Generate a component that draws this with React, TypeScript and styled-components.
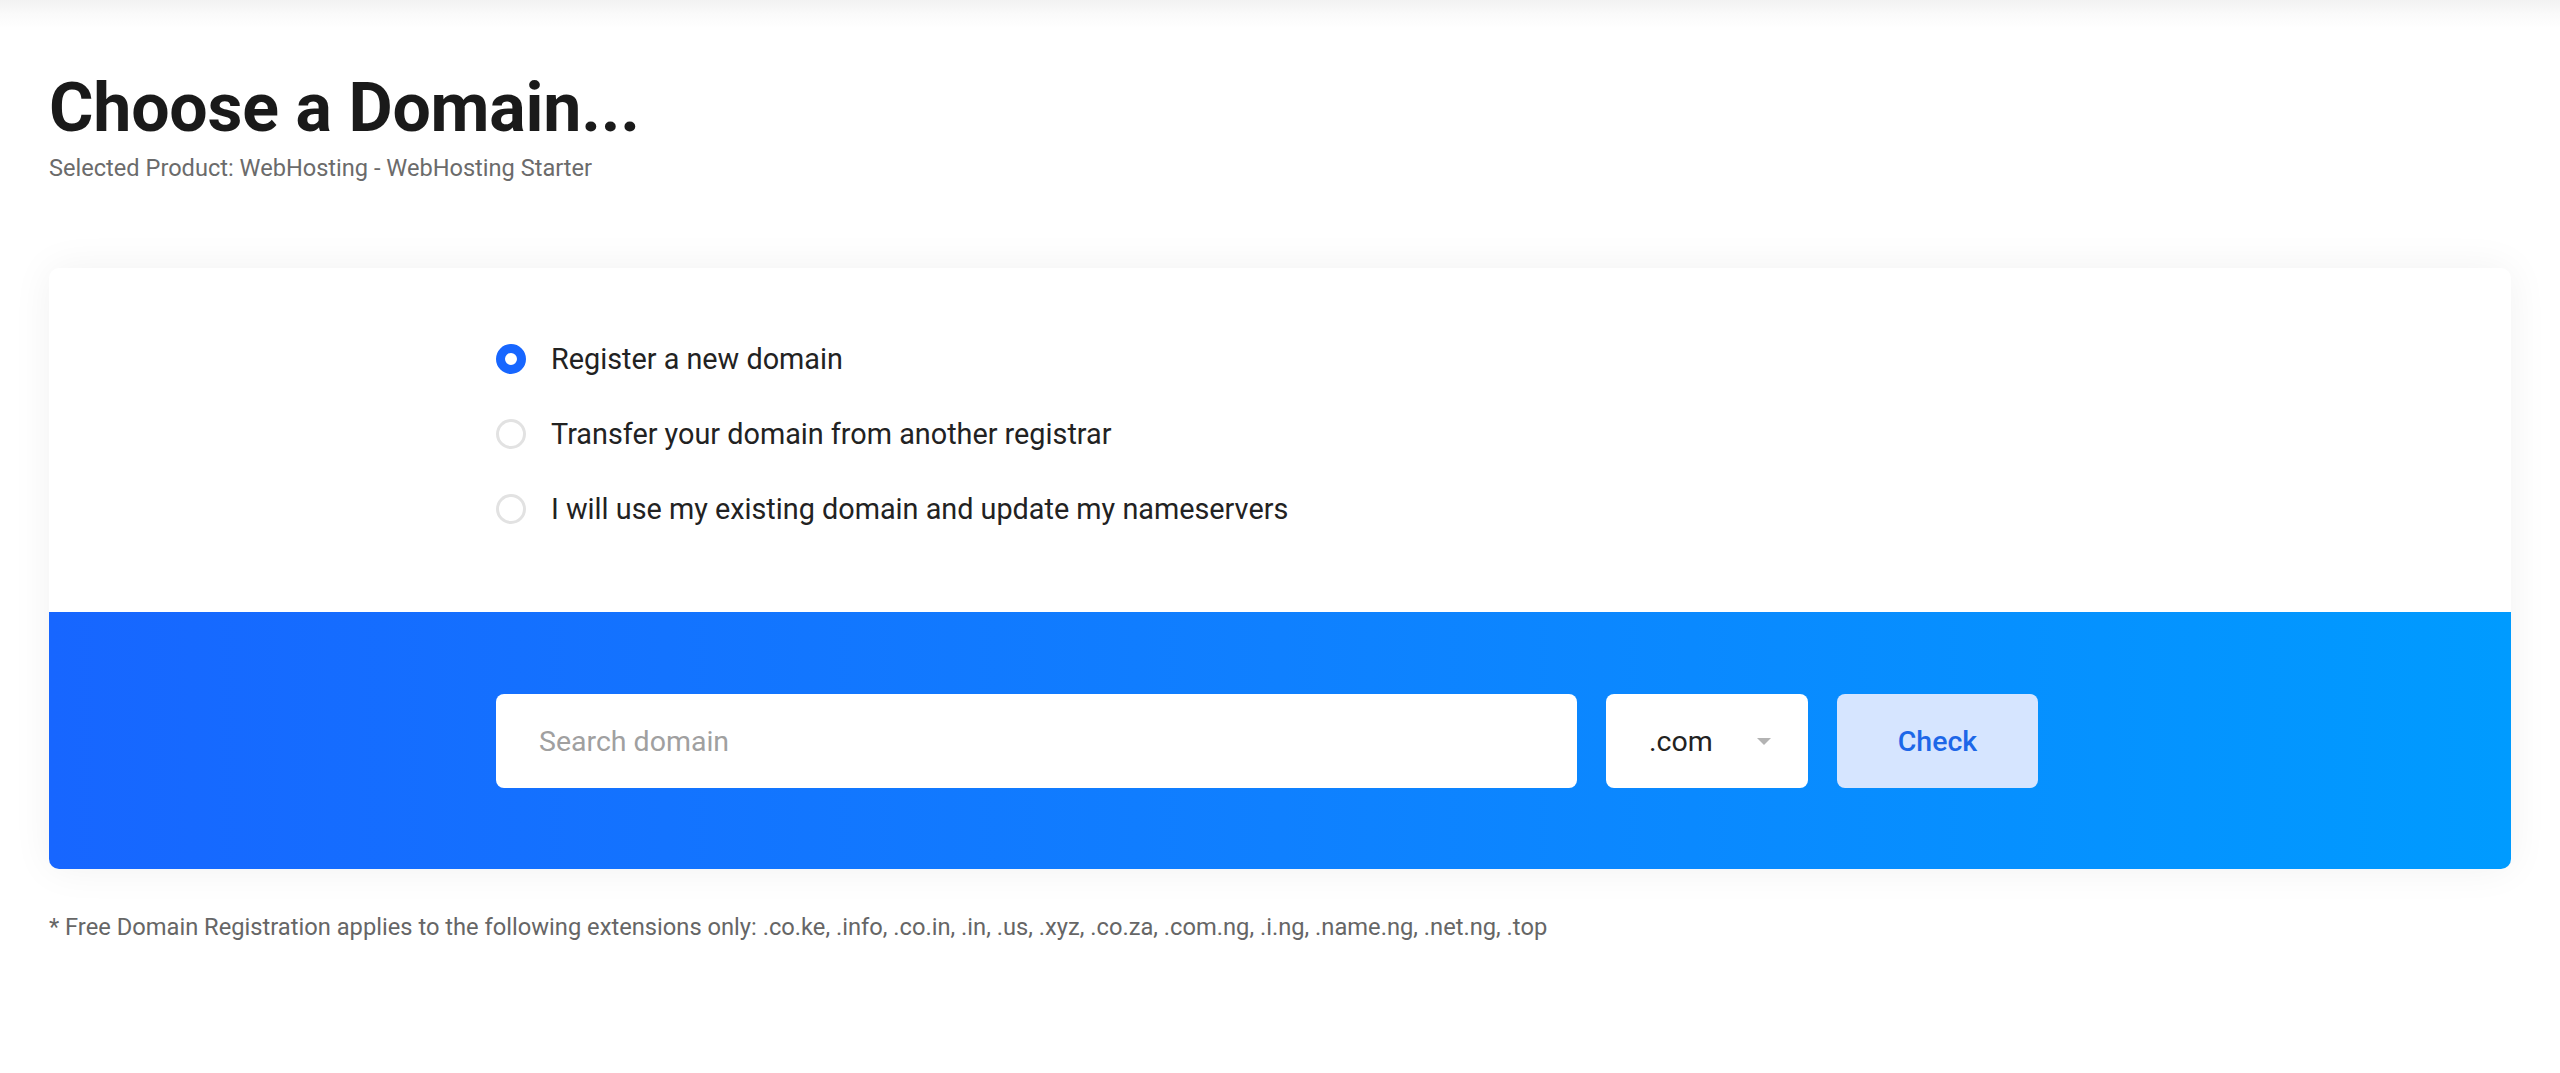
import styled, { createGlobalStyle } from "styled-components";

const GlobalStyle = createGlobalStyle`
  html, body {
    margin: 0;
    padding: 0;
    background: #ffffff;
  }
  body {
    font-family: Roboto, "Noto Sans", "Liberation Sans", sans-serif;
    color: #222;
  }
  * {
    box-sizing: border-box;
  }
`;

const Page = styled.div`
  min-height: 1073px;
  background: linear-gradient(to bottom, #f2f2f2 0px, #fafafa 14px, #ffffff 28px);
  padding: 74px 49px 40px;
`;

const Title = styled.h1`
  margin: 0;
  font-size: 68px;
  line-height: 68px;
  font-weight: 700;
  color: #1a1a1a;
  letter-spacing: -0.2px;
`;

const Subtitle = styled.p`
  margin: 13px 0 0;
  font-size: 23.6px;
  line-height: 27px;
  color: #6b6b6b;
`;

const Card = styled.section`
  margin-top: 86px;
  width: 2462px;
  border-radius: 10px;
  background: #fff;
  box-shadow: 0 0 40px rgba(0, 0, 0, 0.06);
  overflow: hidden;
`;

const Options = styled.div`
  display: flex;
  flex-direction: column;
  gap: 45px;
  padding: 76px 0 88px 447px;
`;

const Option = styled.label`
  display: flex;
  align-items: center;
  gap: 25px;
  height: 30px;
  font-size: 28.8px;
  color: #222;
  cursor: pointer;
`;

const Radio = styled.span<{ $checked?: boolean }>`
  flex: none;
  width: 30px;
  height: 30px;
  border-radius: 50%;
  background: #fff;
  border: ${(p) => (p.$checked ? "9px solid #1766ff" : "3px solid #e2e2e2")};
`;

const SearchBand = styled.div`
  display: flex;
  gap: 29px;
  padding: 82px 0 81px 447px;
  background: linear-gradient(to right, #1766ff 0%, #0f80ff 50%, #009bff 100%);
`;

const SearchInput = styled.input`
  width: 1081px;
  height: 94px;
  border: none;
  border-radius: 8px;
  padding: 0 43px;
  font-family: inherit;
  font-size: 28.5px;
  color: #222;
  background: #fff;
  outline: none;
  &::placeholder {
    color: #a0a0a0;
  }
`;

const Select = styled.div`
  display: flex;
  align-items: center;
  width: 202px;
  height: 94px;
  padding: 0 43px;
  border-radius: 8px;
  background: #fff;
  font-size: 28.5px;
  color: #222;
`;

const Caret = styled.span`
  margin-left: auto;
  width: 0;
  height: 0;
  border-left: 7px solid transparent;
  border-right: 7px solid transparent;
  border-top: 7px solid #b3b3b3;
  margin-right: -6px;
`;

const CheckButton = styled.button`
  width: 201px;
  height: 94px;
  border: none;
  border-radius: 8px;
  background: #d6e5ff;
  color: #1d67e8;
  font-family: inherit;
  font-size: 28.5px;
  font-weight: 500;
  cursor: pointer;
`;

const Note = styled.p`
  margin: 45px 0 0;
  font-size: 23.7px;
  line-height: 27px;
  color: #666;
`;

const options = [
  { label: "Register a new domain", checked: true },
  { label: "Transfer your domain from another registrar", checked: false },
  { label: "I will use my existing domain and update my nameservers", checked: false },
];

export default function App() {
  return (
    <>
      <GlobalStyle />
      <Page>
        <Title>Choose a Domain...</Title>
        <Subtitle>Selected Product: WebHosting - WebHosting Starter</Subtitle>
        <Card>
          <Options>
            {options.map((o) => (
              <Option key={o.label}>
                <Radio $checked={o.checked} />
                {o.label}
              </Option>
            ))}
          </Options>
          <SearchBand>
            <SearchInput placeholder="Search domain" />
            <Select>
              .com
              <Caret />
            </Select>
            <CheckButton>Check</CheckButton>
          </SearchBand>
        </Card>
        <Note>
          * Free Domain Registration applies to the following extensions only: .co.ke, .info,
          .co.in, .in, .us, .xyz, .co.za, .com.ng, .i.ng, .name.ng, .net.ng, .top
        </Note>
      </Page>
    </>
  );
}
